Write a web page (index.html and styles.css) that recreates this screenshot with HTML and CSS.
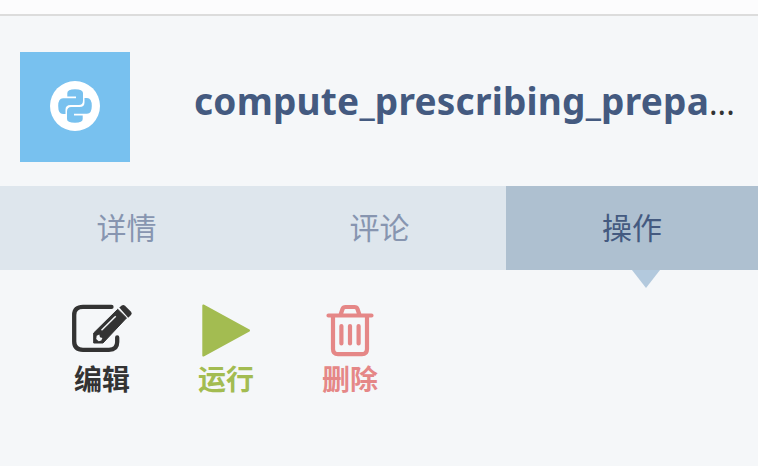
FILE: index.html
```html
<!DOCTYPE html>
<html lang="zh-CN">
<head>
<meta charset="utf-8">
<title>compute_prescribing_prepa…</title>
<link rel="stylesheet" href="styles.css">
</head>
<body>
<div class="topbar"></div>
<header class="header">
  <div class="badge">
    <svg width="50" height="50" viewBox="0 0 50 50">
      <circle cx="25" cy="25" r="25" fill="#fff"/>
      <g fill="#78c1ef">
        <path id="snake" d="M17.300 15V12Q17.300 8.200 25 8.200Q33 8.200 33 12V19.500Q33 24 28.800 24H20.500Q15.500 24 15.500 28.500V33H13Q8.200 33 8.200 25Q8.200 17.200 13 17.200H26V15.400H17.300Z"/>
        <use href="#snake" transform="rotate(180 25 25)"/>
      </g>
    </svg>
  </div>
  <h1 class="title"><span class="name">compute_prescribing_prepa</span><span class="dots">...</span></h1>
</header>
<nav class="tabs">
  <div class="tab">详情</div>
  <div class="tab">评论</div>
  <div class="tab active">操作</div>
</nav>
<main class="actions">
  <div class="action edit">
    <svg width="64" height="60" viewBox="0 0 64 60">
      <path d="M41.500 6.900H13Q4.200 6.900 4.200 15V41.500Q4.200 49.800 13 49.800H39Q47.200 49.800 47.200 42V37.500" fill="none" stroke="#333" stroke-width="4.300" stroke-linecap="round"/>
      <path d="M23.700 33L47.700 9.300L56.500 17.900L33 43H23.700Z" fill="#333" stroke="#333" stroke-width="1" stroke-linejoin="round"/>
      <path d="M49.300 7.600L51.700 5.500Q53.300 4.300 55 5.700L61 11.700Q62.500 13.400 61 15L58.200 17.700Z" fill="#333"/>
      <path d="M31.500 30.200L45.700 16.200" stroke="#f5f7f9" stroke-width="1.500"/>
      <path d="M26.700 35.800L29.300 34.600L30 37.200L32.400 37.900L31.300 40.600L28.700 41.200L26.200 38.900Z" fill="#f5f7f9"/>
    </svg>
    <span>编辑</span>
  </div>
  <div class="action run">
    <svg width="64" height="60" viewBox="0 0 64 60">
      <path d="M9.300 5.500L55 30.500L9.300 55.500Z" fill="#a3bc51" stroke="#a3bc51" stroke-width="2" stroke-linejoin="round"/>
    </svg>
    <span>运行</span>
  </div>
  <div class="action delete">
    <svg width="64" height="60" viewBox="0 0 64 60" fill="none" stroke="#e58787" stroke-width="4.200" stroke-linecap="round">
      <path d="M10.500 15.500H53.500M15 16V49Q15 54.200 20 54.200H44Q49 54.200 49 49V16M22.500 15L24.500 9Q25.300 7 27.500 7H36.500Q38.700 7 39.500 9L41.500 15M23.400 26V43.500M32 26V43.500M40.600 26V43.500"/>
    </svg>
    <span>删除</span>
  </div>
</main>
</body>
</html>
```
FILE: styles.css
```css
* { box-sizing: border-box; }
body {
  margin: 0;
  height: 466px;
  overflow: hidden;
  background: #f5f7f9;
  font-family: "Noto Sans CJK SC", sans-serif;
}
.topbar {
  height: 16px;
  background: #fcfcfd;
  border-bottom: 2px solid #dcdcdc;
}
.header {
  display: flex;
  height: 170px;
  padding: 36px 20px 24px;
}
.badge {
  width: 110px;
  height: 110px;
  padding: 29px 30px;
  background: #78c1ef;
}
.badge svg, .action svg { display: block; }
.title {
  margin: 0 0 0 64px;
  font: 700 37px/97px "Noto Sans", sans-serif;
  color: #445a80;
  white-space: nowrap;
}
.name { letter-spacing: 0.22px; }
.dots {
  font-weight: 400;
  font-size: 32px;
  color: #333;
}
.tabs {
  display: grid;
  grid-template-columns: 253px 253px 252px;
  height: 84px;
}
.tab {
  position: relative;
  background: #dee6ed;
  color: #8795b0;
  font-size: 30px;
  line-height: 80px;
  text-align: center;
}
.tab.active {
  background: #aec0d0;
  color: #445a80;
}
.tab.active::after {
  content: "";
  position: absolute;
  top: 84px;
  left: 126px;
  border: 14px solid transparent;
  border-top: 18px solid #b3c9dd;
  border-bottom: 0;
}
.actions {
  display: flex;
  gap: 60px;
  padding: 30px 0 0 70px;
}
.action {
  width: 64px;
  font-size: 28px;
  font-weight: 700;
  line-height: 37px;
  text-align: center;
}
.edit { color: #333; }
.run { color: #a3bc51; }
.delete { color: #e58787; }
```
